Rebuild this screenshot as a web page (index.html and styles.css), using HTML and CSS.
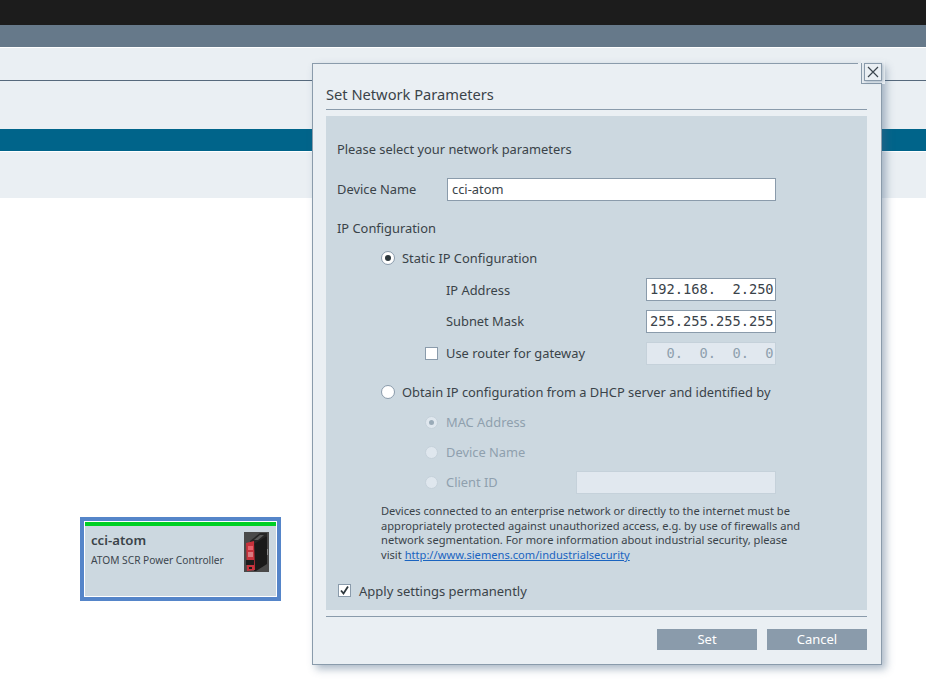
FILE: index.html
```html
<!DOCTYPE html>
<html lang="en">
<head>
<meta charset="utf-8">
<title>Set Network Parameters</title>
<link rel="stylesheet" href="styles.css">
</head>
<body>
<header class="topbar"></header>
<div class="subbar"></div>
<section class="ribbon">
  <div class="ribbon-top"></div>
  <div class="ribbon-mid"></div>
  <div class="ribbon-teal"></div>
  <div class="ribbon-bottom"></div>
</section>
<main class="canvas">
  <article class="device-card">
    <div class="device-status"></div>
    <div class="device-body">
      <div class="device-text">
        <div class="device-name">cci-atom</div>
        <div class="device-type">ATOM SCR Power Controller</div>
      </div>
      <svg class="device-img" width="25" height="40" viewBox="0 0 25 40" aria-hidden="true">
        <rect width="25" height="40" fill="#4a4a4a"/>
        <polygon points="6,9 16,1 23,1 23,4 14,12 6,12" fill="#262626"/>
        <polygon points="10,8 16,3 20,3 14,8" fill="#5a5a5a"/>
        <polygon points="10,12 23,4 23,32 12,39 10,39" fill="#1a1a1a"/>
        <rect x="23" y="17" width="1" height="6" fill="#8a8a8a"/>
        <polygon points="2,11 10,9 11,38 3,39" fill="#c8323c"/>
        <rect x="4" y="14" width="5" height="4" fill="#e8606a"/>
        <rect x="4" y="20" width="5" height="5" fill="#d97a80"/>
        <rect x="2" y="28" width="8" height="5" fill="#1c1c1c"/>
        <rect x="5" y="35" width="3" height="2" fill="#1c1c1c"/>
      </svg>
    </div>
  </article>
</main>

<div class="dialog" role="dialog" aria-label="Set Network Parameters">
  <div class="close-notch">
    <button class="close-btn" type="button" aria-label="Close">
      <svg width="12" height="12" viewBox="0 0 12 12"><path d="M1 1 L11 11 M11 1 L1 11" stroke="#3c464e" stroke-width="1.2" fill="none"/></svg>
    </button>
  </div>
  <h1 class="dialog-title">Set Network Parameters</h1>
  <div class="panel">
    <p class="row intro">Please select your network parameters</p>
    <div class="row name-row">
      <label class="field-label">Device Name</label>
      <div class="input text-input">cci-atom</div>
    </div>
    <div class="row section-label">IP Configuration</div>

    <div class="row static-row"><span class="radio checked"></span><span>Static IP Configuration</span></div>
    <div class="row ip-row ip-first"><span>IP Address</span><div class="input ip-input">192.168.  2.250</div></div>
    <div class="row ip-row ip-next"><span class="raised">Subnet Mask</span><div class="input ip-input">255.255.255.255</div></div>
    <div class="row gw-row"><span class="checkbox"></span><span class="gw-label raised">Use router for gateway</span><div class="input ip-input disabled">  0.  0.  0.  0</div></div>

    <div class="row dhcp-row"><span class="radio"></span><span>Obtain IP configuration from a DHCP server and identified by</span></div>
    <div class="row sub-row first-sub muted"><span class="radio small dis-checked"></span><span>MAC Address</span></div>
    <div class="row sub-row muted"><span class="radio small"></span><span>Device Name</span></div>
    <div class="row sub-row client-row muted"><span class="radio small"></span><span class="raised">Client ID</span><div class="input client-input disabled"></div></div>

    <p class="note">Devices connected to an enterprise network or directly to the internet must be<br>appropriately protected against unauthorized access, e.g. by use of firewalls and<br>network segmentation. For more information about industrial security, please<br>visit <a href="#" class="note-link">http://www.siemens.com/industrialsecurity</a></p>

    <div class="row apply-row">
      <span class="checkbox">
        <svg width="11" height="11" viewBox="0 0 11 11"><path d="M2 5.5 L4.5 8.5 L9 1.5" stroke="#2d373c" stroke-width="1.8" fill="none"/></svg>
      </span>
      <span>Apply settings permanently</span>
    </div>
  </div>
  <div class="dialog-footer">
    <button class="btn" type="button">Set</button>
    <button class="btn" type="button">Cancel</button>
  </div>
</div>
</body>
</html>
```
FILE: styles.css
```css
* { box-sizing: border-box; }
html, body { margin: 0; padding: 0; height: 100%; }
body {
  width: 926px;
  height: 683px;
  overflow: hidden;
  background: #fff;
  font-family: "Noto Sans", "Open Sans", sans-serif;
  font-size: 12.87px;
  color: #3a4349;
  position: relative;
}
.topbar { height: 25px; background: #1c1c1c; }
.subbar { height: 22px; background: #66798a; }
.ribbon { padding-top: 1px; background: #fff; }
.ribbon-top { height: 33px; background: #eaeff3; border-bottom: 1px solid #56697c; }
.ribbon-mid { height: 48px; background: #eaeff3; }
.ribbon-teal { height: 22px; background: #00648a; }
.ribbon-bottom { height: 47px; background: #eaeff3; border-top: 1px solid #fff; }

.canvas { padding: 319px 0 0 80px; }
.device-card {
  width: 201px;
  height: 84px;
  border: 4px solid #5585c9;
  outline: 1px solid #fff;
  outline-offset: -5px;
  background: #ccd8e0;
  padding: 1px;
}
.device-status { height: 4px; background: #00d024; }
.device-body { display: flex; justify-content: space-between; padding: 6px 7px 0 6px; }
.device-name { font-weight: 600; font-size: 13.2px; line-height: 18px; margin-top: -1px; color: #3a4349; }
.device-type { font-size: 10.2px; line-height: 14px; margin-top: 4px; color: #3c464e; white-space: nowrap; }
.device-img { flex: none; }

.dialog {
  position: absolute;
  left: 312px;
  top: 63px;
  width: 570px;
  height: 602px;
  background: #eaeff3;
  border: 1px solid #8a9bab;
  box-shadow: 4px 4px 8px rgba(70, 100, 130, .45);
  padding: 0 14px 0 13px;
}
.close-notch {
  position: absolute;
  top: -1px;
  right: -1px;
  width: 21px;
  height: 21px;
  background: #eaeff3;
  border-left: 1px solid #8a9bab;
  border-bottom: 1px solid #8a9bab;
  display: flex;
  justify-content: flex-end;
  box-shadow: -3px 0 0 #eaeff3, 0 -3px 0 #eaeff3, 3px -3px 0 #eaeff3, 3px 0 0 #eaeff3;
}
.close-btn {
  width: 18px;
  height: 18px;
  padding: 0;
  background: #eaeff3;
  border: 1px solid #8a9bab;
  display: flex;
  align-items: center;
  justify-content: center;
  box-shadow: 1px 1px 3px rgba(70, 100, 130, .4);
}
.dialog-title {
  margin: 0;
  height: 46px;
  padding-top: 20px;
  font-size: 14.67px;
  line-height: 20px;
  font-weight: 400;
  border-bottom: 1px solid #8a9bab;
}
.panel {
  margin-top: 6px;
  height: 494px;
  background: #ccd8e0;
  padding: 23px 0 0 11px;
}
.row { display: flex; align-items: center; margin: 0; height: 20px; line-height: 20px; white-space: nowrap; }
.intro { display: block; }
.name-row { margin-top: 19px; height: 23px; }
.field-label { width: 110px; margin-bottom: 2px; }
.raised { margin-bottom: 2px; }
.input {
  height: 23px;
  background: #fff;
  border: 1px solid #8a9bab;
  line-height: 21px;
}
.text-input { width: 329px; padding-left: 4px; }
.section-label { margin-top: 17px; }
.static-row { margin-top: 10px; padding-left: 44px; }
.radio {
  flex: none;
  width: 14px;
  height: 14px;
  border-radius: 50%;
  background: #fff;
  border: 1px solid #8a9bab;
  margin-right: 7px;
  display: flex;
  align-items: center;
  justify-content: center;
}
.radio.checked::after {
  content: "";
  width: 6px;
  height: 6px;
  border-radius: 50%;
  background: #2d373c;
}
.radio.small { width: 13px; height: 13px; background: #dfe7ee; border-color: #c5d1da; margin-right: 8px; }
.radio.dis-checked::after {
  content: "";
  width: 5px;
  height: 5px;
  border-radius: 50%;
  background: #9aabb8;
}
.ip-row { padding-left: 109px; height: 23px; justify-content: space-between; width: 439px; }
.ip-first { margin-top: 10px; }
.ip-next { margin-top: 9px; }
.ip-input {
  width: 130px;
  font-family: "DejaVu Sans Mono", "Liberation Mono", monospace;
  font-size: 13.7px;
  padding-left: 3px;
  white-space: pre;
  color: #3a4349;
}
.input.disabled { background: #e1e8ef; border-color: #c5d1da; color: #8fa0ae; }
.gw-row { margin-top: 9px; height: 23px; padding-left: 88px; width: 439px; }
.checkbox {
  flex: none;
  width: 13px;
  height: 13px;
  background: #fff;
  border: 1px solid #8a9bab;
  display: flex;
  align-items: center;
  justify-content: center;
}
.gw-label { margin-left: 8px; flex: 1; }
.dhcp-row { margin-top: 17px; padding-left: 44px; }
.sub-row { margin-top: 10px; padding-left: 88px; }
.first-sub { margin-top: 10px; }
.muted { color: #8fa0ae; }
.client-row { height: 23px; margin-top: 9px; }
.client-input { width: 200px; margin-left: 78px; }
.note {
  margin: 0;
  padding: 10px 0 0 44px;
  font-size: 11.13px;
  line-height: 14.67px;
  color: #3a4349;
  white-space: nowrap;
}
.note-link { color: #1a64c0; text-decoration: underline; }
.apply-row { margin-top: 18px; padding-left: 1px; font-size: 13px; }
.apply-row .checkbox { margin-right: 8px; }
.dialog-footer {
  margin-top: 6px;
  border-top: 1px solid #8a9bab;
  padding-top: 12px;
  display: flex;
  justify-content: flex-end;
  gap: 10px;
}
.btn {
  width: 100px;
  height: 21px;
  padding: 0;
  border: 0;
  background: #8a9bab;
  color: #fff;
  font-family: inherit;
  font-size: 13px;
  line-height: 21px;
}
```
